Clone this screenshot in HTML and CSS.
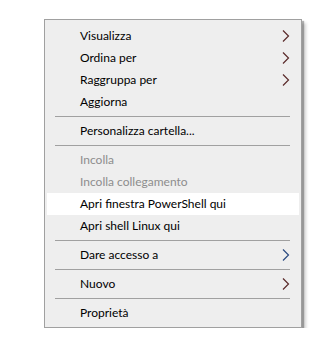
FILE: index.html
```html
<!DOCTYPE html>
<html lang="it">
<head>
<meta charset="utf-8">
<title>Menu contestuale</title>
<link rel="stylesheet" href="styles.css">
</head>
<body>
<div class="menu">
  <div class="item">Visualizza<svg class="arrow" viewBox="0 0 8 12"><path d="M1 0.5 L6.5 6 L1 11.5"/></svg></div>
  <div class="item">Ordina per<svg class="arrow" viewBox="0 0 8 12"><path d="M1 0.5 L6.5 6 L1 11.5"/></svg></div>
  <div class="item">Raggruppa per<svg class="arrow" viewBox="0 0 8 12"><path d="M1 0.5 L6.5 6 L1 11.5"/></svg></div>
  <div class="item">Aggiorna</div>
  <div class="sep"></div>
  <div class="item">Personalizza cartella...</div>
  <div class="sep"></div>
  <div class="item disabled">Incolla</div>
  <div class="item disabled">Incolla collegamento</div>
  <div class="item hover">Apri finestra PowerShell qui</div>
  <div class="item">Apri shell Linux qui</div>
  <div class="sep"></div>
  <div class="item">Dare accesso a<svg class="arrow blue" viewBox="0 0 8 12"><path d="M1 0.5 L6.5 6 L1 11.5"/></svg></div>
  <div class="sep"></div>
  <div class="item">Nuovo<svg class="arrow" viewBox="0 0 8 12"><path d="M1 0.5 L6.5 6 L1 11.5"/></svg></div>
  <div class="sep"></div>
  <div class="item">Proprietà</div>
</div>
</body>
</html>
```
FILE: styles.css
```css
html, body {
  margin: 0;
  background: #ffffff;
}
body {
  padding: 19px 0 0 44px;
  font-family: Lato, "Noto Sans", sans-serif;
  font-size: 12px;
  color: #000;
}
.menu {
  width: 252px;
  background: #eeeeee;
  border: 1px solid #a0a0a0;
  padding: 5px 2px 3px 2px;
  box-shadow: 2px 2px 1px rgba(0,0,0,0.28), 4px 4px 3px rgba(0,0,0,0.18);
}
.item {
  height: 22px;
  line-height: 22px;
  padding: 0 9px 0 33px;
  display: flex;
  align-items: center;
  justify-content: space-between;
  white-space: nowrap;
}
.item.disabled {
  color: #8d8d8d;
}
.item.hover {
  background: #ffffff;
}
.sep {
  height: 1px;
  background: #a0a0a0;
  margin: 3px 9px 3px 8px;
}
.arrow {
  width: 8px;
  height: 12px;
  fill: none;
  stroke: #5a2a2a;
  stroke-width: 1.2;
}
.arrow.blue {
  stroke: #2a4a80;
}
```
